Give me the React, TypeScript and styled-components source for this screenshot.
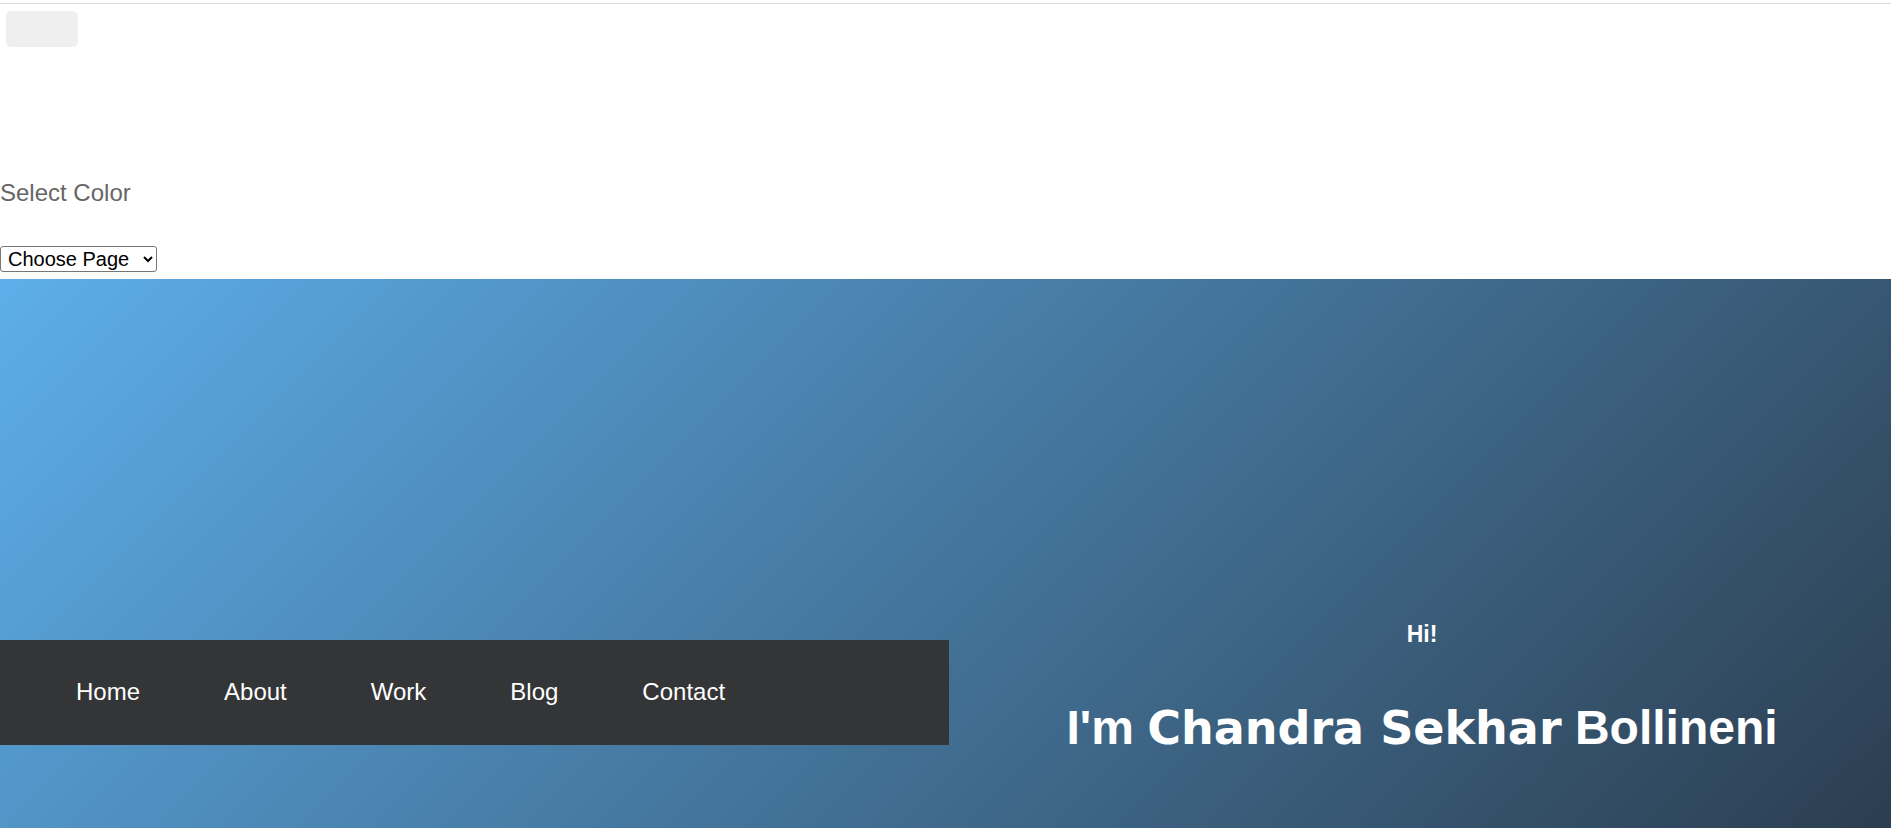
import React from "react";
import styled, { createGlobalStyle } from "styled-components";

const Global = createGlobalStyle`
  html, body {
    margin: 0;
    padding: 0;
    background: #ffffff;
    font-family: "Liberation Sans", Arial, sans-serif;
  }
  * { box-sizing: border-box; }
`;

const Page = styled.div`
  display: flex;
  flex-direction: column;
  width: 100%;
`;

const TopRule = styled.div`
  margin-top: 3px;
  height: 1px;
  background: #dcdcdc;
`;

const ToolRow = styled.div`
  display: flex;
  padding: 7px 6px 0;
`;

const IconButton = styled.button`
  width: 72px;
  height: 36px;
  border: none;
  border-radius: 5px;
  background: #efefef;
  padding: 0;
`;

const Label = styled.p`
  margin: 132px 0 0;
  font-size: 24px;
  line-height: 28px;
  color: #666666;
`;

const PageSelect = styled.select`
  margin-top: 39px;
  align-self: flex-start;
  width: 157px;
  height: 26px;
  font-family: "Liberation Sans", Arial, sans-serif;
  font-size: 20px;
  color: #000;
  background: #fff;
  border: 1px solid #767676;
  border-radius: 3px;
  padding: 0 2px 0 3px;
`;

const Hero = styled.section`
  margin-top: 7px;
  height: 549px;
  display: grid;
  grid-template-columns: 949px 1fr;
  background: linear-gradient(135deg, #5daeea 0%, #2c3e50 100%);
  overflow: hidden;
`;

const LeftCol = styled.div`
  padding-top: 361px;
`;

const NavBar = styled.nav`
  height: 105px;
  background: #343536;
  display: flex;
  align-items: center;
  padding: 0 0 2px 76px;
  gap: 84px;
`;

const NavLink = styled.a`
  color: #ffffff;
  font-size: 24px;
  line-height: 28px;
  text-decoration: none;
`;

const RightCol = styled.div`
  padding-top: 342px;
  padding-left: 4px;
  text-align: center;
  color: #ffffff;
`;

const Greeting = styled.h3`
  margin: 0;
  font-size: 23px;
  line-height: 26px;
  font-weight: 700;
`;

const Name = styled.h1`
  margin: 53px 0 0;
  font-size: 48px;
  line-height: 56px;
  font-weight: 700;
  white-space: nowrap;
`;

const Accent = styled.span`
  font-family: "DejaVu Sans", "Liberation Sans", sans-serif;
  font-size: 46px;
  font-weight: 700;
`;

const links = ["Home", "About", "Work", "Blog", "Contact"];

export default function App() {
  return (
    <>
      <Global />
      <Page>
        <TopRule />
        <ToolRow>
          <IconButton aria-label="menu" />
        </ToolRow>
        <Label>Select Color</Label>
        <PageSelect defaultValue="choose">
          <option value="choose">Choose Page</option>
          <option value="home">Home</option>
          <option value="about">About</option>
        </PageSelect>
        <Hero>
          <LeftCol>
            <NavBar>
              {links.map((l) => (
                <NavLink key={l} href="#">
                  {l}
                </NavLink>
              ))}
            </NavBar>
          </LeftCol>
          <RightCol>
            <Greeting>Hi!</Greeting>
            <Name>
              I'm <Accent>Chandra Sekhar</Accent> Bollineni
            </Name>
          </RightCol>
        </Hero>
      </Page>
    </>
  );
}
